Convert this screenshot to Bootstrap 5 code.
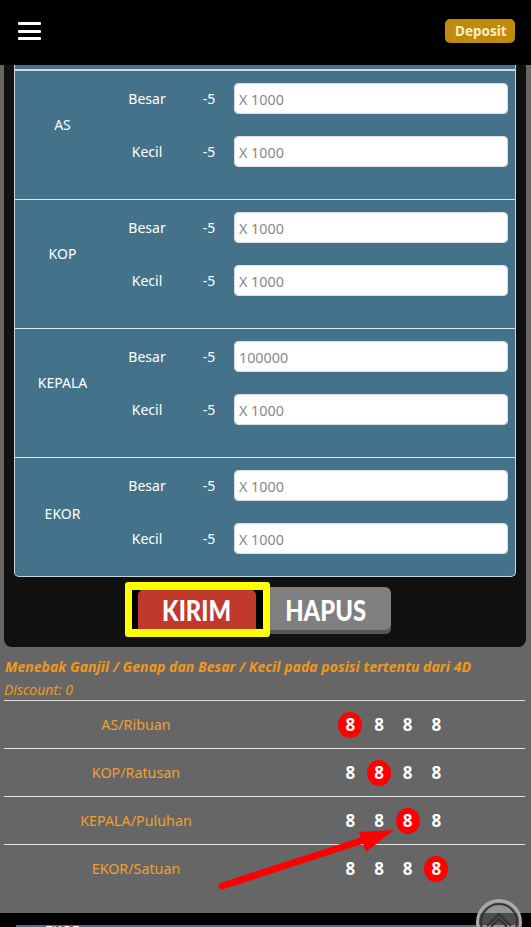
<!DOCTYPE html>
<html lang="id"><head><meta charset="utf-8">
<link href="https://cdn.jsdelivr.net/npm/bootstrap@5.3.0/dist/css/bootstrap.min.css" rel="stylesheet">
<style>
html,body{height:927px;overflow:hidden}
body{background:#666;font-family:"Noto Sans",sans-serif;position:relative}
.topbar{height:65px;background:#000;padding:19px 16px 0 18px}
.burger{width:23px;height:18px;display:flex;flex-direction:column;justify-content:space-between;margin-top:3px}
.burger i{display:block;height:3px;background:#fff;border-radius:1px}
.btn-dep{background:#c08a0a;color:#fbeec4;font-weight:700;font-size:13.5px;line-height:24px;padding:0 10px;border-radius:5px;border:0;height:24px;width:70px}
.panel-dark{margin:0 5px 0 4px;background:#111;border-radius:0 0 8px 8px;height:582px;padding:0 10px}
.bet-box{background:#44728a;border:1px solid #c9d6dc;border-top:0;border-radius:0 0 5px 5px;color:#fff;font-size:14px;height:512px}
.sliver{height:6px;border-bottom:2px solid #c9d6dc}
.bet-group{height:129px;border-bottom:1px solid #dfe7ea;padding-right:7px}
.bet-group:last-child{height:118px;border-bottom:0}
.g-label{width:95px;text-align:center;padding-bottom:21px}
.bet-group:last-child .g-label{padding-bottom:8px}
.g-rows{flex:1;display:flex;flex-direction:column;gap:22px;padding-top:12px}
.g-row{height:31px}
.g-name{width:74px;text-align:center}
.g-val{width:50px;text-align:center}
.g-row .form-control{height:31px;min-height:0;padding:2px 4px 0;font-size:14.3px;border-radius:4px;border:1px solid #ddd;color:#888;flex:1;width:0}
.g-row .form-control::placeholder{color:#888;opacity:1}
.act-row{padding-top:5px;height:60px}
.kirim-wrap{width:145px;height:55px;border-style:solid;border-color:#ff0;border-width:8px 7px 8px 7px;border-radius:3px;background:#000;padding:0 6px;margin-left:111px}
.btn-kirim{display:block;width:118px;height:39px;background:#c0392b;color:#fff;border-radius:5px 5px 0 0;text-align:center;line-height:40px}
.btn-hapus{width:121px;height:47px;margin-top:5px;padding-right:9px;background:#7f7f7f;color:#fff;text-align:center;line-height:46px;border-radius:0 6px 6px 0;box-shadow:inset 0 -4px 0 #555}
.cond{display:inline-block;font-family:Lato,"Noto Sans",sans-serif;font-weight:900;font-size:28px;transform:scaleX(.85)}
.info-h{color:#f0981d;font-weight:700;font-style:italic;font-size:14.1px;line-height:22px;margin:9px 0 0 5px;white-space:nowrap}
.info-d{color:#f0981d;font-style:italic;font-size:14px;line-height:24px;margin-left:4px;height:22px}
.pos-list{margin:0 6px 0 4px;border-top:1px solid #ddd}
.pos-row{height:48px;border-bottom:1px solid #e3e3e3;color:#f0a030;font-size:14.3px}
.pos-row:last-child{border-bottom:0}
.pos-name{width:264px;text-align:center}
.digits{display:flex;margin-left:68px}
.dg{width:28.7px;height:26px;display:flex;align-items:center;justify-content:center;color:#fff;font-weight:700;font-size:17px}
.dg span{width:24px;height:26px;border-radius:50%;display:flex;align-items:center;justify-content:center}
.dg .hit{background:#f00}
.band{position:absolute;left:0;right:0;top:913px;height:14px;background:#000;overflow:hidden}
.band div{position:absolute;left:16px;right:13px;top:12px;height:20px;background:#44728a;color:#fff;font-size:14px;padding-left:29px;line-height:14px}
.band span{position:relative;top:-1px}
.arrow,.to-top{position:absolute}
.arrow{left:0;top:0}
.to-top{left:476px;top:899px}
</style></head>
<body>
<nav class="topbar d-flex justify-content-between align-items-start">
  <div class="burger"><i></i><i></i><i></i></div>
  <button class="btn-dep" type="button">Deposit</button>
</nav>
<div class="panel-dark">
  <div class="bet-box">
    <div class="sliver"></div>
    <div class="bet-group d-flex align-items-center">
      <div class="g-label">AS</div>
      <div class="g-rows align-self-start">
        <div class="g-row d-flex align-items-center"><div class="g-name">Besar</div><div class="g-val">-5</div><input class="form-control" placeholder="X 1000"></div>
        <div class="g-row d-flex align-items-center"><div class="g-name">Kecil</div><div class="g-val">-5</div><input class="form-control" placeholder="X 1000"></div>
      </div>
    </div>
    <div class="bet-group d-flex align-items-center">
      <div class="g-label">KOP</div>
      <div class="g-rows align-self-start">
        <div class="g-row d-flex align-items-center"><div class="g-name">Besar</div><div class="g-val">-5</div><input class="form-control" placeholder="X 1000"></div>
        <div class="g-row d-flex align-items-center"><div class="g-name">Kecil</div><div class="g-val">-5</div><input class="form-control" placeholder="X 1000"></div>
      </div>
    </div>
    <div class="bet-group d-flex align-items-center">
      <div class="g-label">KEPALA</div>
      <div class="g-rows align-self-start">
        <div class="g-row d-flex align-items-center"><div class="g-name">Besar</div><div class="g-val">-5</div><input class="form-control" value="100000"></div>
        <div class="g-row d-flex align-items-center"><div class="g-name">Kecil</div><div class="g-val">-5</div><input class="form-control" placeholder="X 1000"></div>
      </div>
    </div>
    <div class="bet-group d-flex align-items-center">
      <div class="g-label">EKOR</div>
      <div class="g-rows align-self-start">
        <div class="g-row d-flex align-items-center"><div class="g-name">Besar</div><div class="g-val">-5</div><input class="form-control" placeholder="X 1000"></div>
        <div class="g-row d-flex align-items-center"><div class="g-name">Kecil</div><div class="g-val">-5</div><input class="form-control" placeholder="X 1000"></div>
      </div>
    </div>
  </div>
  <div class="act-row d-flex align-items-start">
    <div class="kirim-wrap"><div class="btn-kirim"><span class="cond">KIRIM</span></div></div>
    <div class="btn-hapus"><span class="cond">HAPUS</span></div>
  </div>
</div>
<div class="info-h">Menebak Ganjil / Genap dan Besar / Kecil pada posisi tertentu dari 4D</div>
<div class="info-d">Discount: 0</div>
<div class="pos-list">
  <div class="pos-row d-flex align-items-center"><div class="pos-name">AS/Ribuan</div><div class="digits"><div class="dg"><span class="hit">8</span></div><div class="dg"><span>8</span></div><div class="dg"><span>8</span></div><div class="dg"><span>8</span></div></div></div>
  <div class="pos-row d-flex align-items-center"><div class="pos-name">KOP/Ratusan</div><div class="digits"><div class="dg"><span>8</span></div><div class="dg"><span class="hit">8</span></div><div class="dg"><span>8</span></div><div class="dg"><span>8</span></div></div></div>
  <div class="pos-row d-flex align-items-center"><div class="pos-name">KEPALA/Puluhan</div><div class="digits"><div class="dg"><span>8</span></div><div class="dg"><span>8</span></div><div class="dg"><span class="hit">8</span></div><div class="dg"><span>8</span></div></div></div>
  <div class="pos-row d-flex align-items-center"><div class="pos-name">EKOR/Satuan</div><div class="digits"><div class="dg"><span>8</span></div><div class="dg"><span>8</span></div><div class="dg"><span>8</span></div><div class="dg"><span class="hit">8</span></div></div></div>
</div>
<div class="band"><div><span>EKOR</span></div></div>
<svg class="arrow" width="531" height="927" viewBox="0 0 531 927" aria-hidden="true">
  <line x1="222" y1="886" x2="370" y2="838" stroke="#f00" stroke-width="7" stroke-linecap="round"/>
  <polygon points="394,830 359,832 366,852" fill="#f00"/>
</svg>
<svg class="to-top" width="46" height="28" viewBox="0 0 46 28" aria-hidden="true">
  <circle cx="23" cy="23" r="21.5" fill="rgba(255,255,255,.3)" stroke="#aaa" stroke-width="3"/>
  <circle cx="23" cy="23" r="18" fill="none" stroke="#333" stroke-width="2"/>
  <path d="M11 27 23 15 35 27M15 28 23 20 31 28" fill="none" stroke="#333" stroke-width="2"/>
</svg>
<script src="https://cdn.jsdelivr.net/npm/bootstrap@5.3.0/dist/js/bootstrap.bundle.min.js"></script>
</body></html>
